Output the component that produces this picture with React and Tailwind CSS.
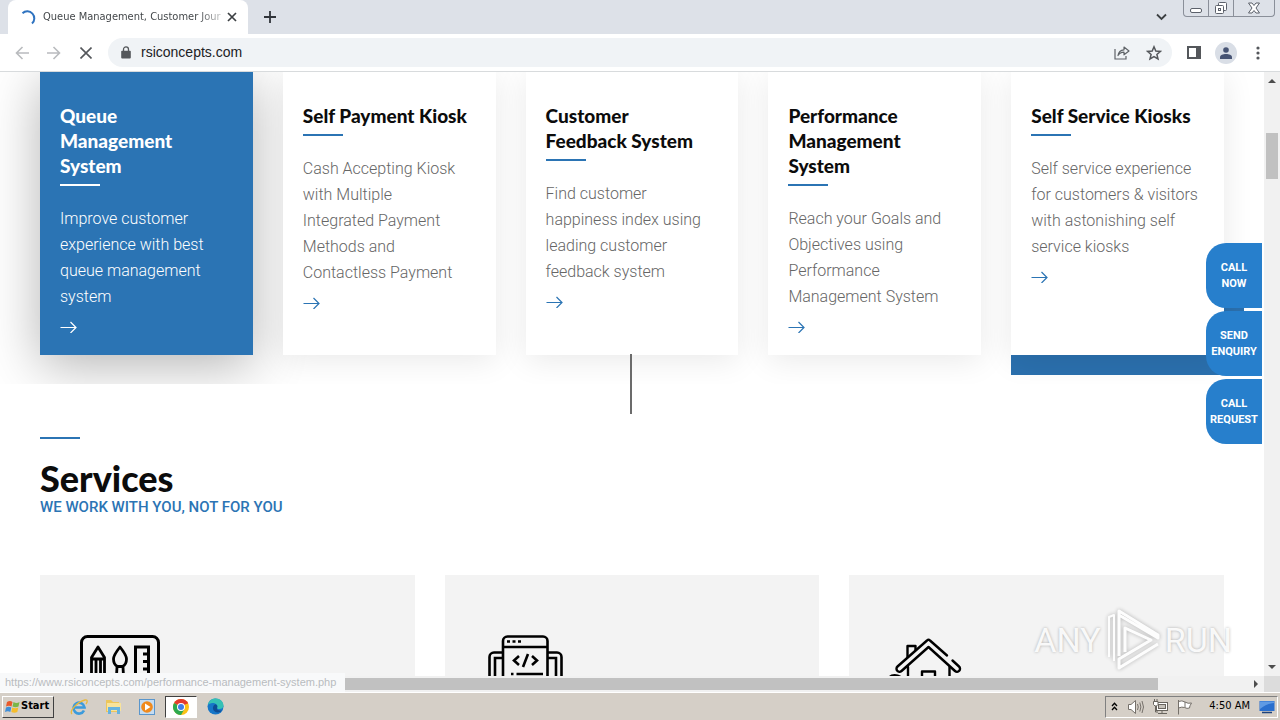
import React, { useState } from 'react';

const products = [
    { title: 'Queue Management System', text: 'Improve customer experience with best queue management system', active: true },
    { title: 'Self Payment Kiosk', text: 'Cash Accepting Kiosk with Multiple Integrated Payment Methods and Contactless Payment', narrow: true },
    { title: 'Customer Feedback System', text: 'Find customer happiness index using leading customer feedback system' },
    { title: 'Performance Management System', text: 'Reach your Goals and Objectives using Performance Management System' },
    { title: 'Self Service Kiosks', text: 'Self service experience for customers & visitors with astonishing self service kiosks', accent: true },
];

const sideActions = [
    ['CALL', 'NOW'],
    ['SEND', 'ENQUIRY'],
    ['CALL', 'REQUEST'],
];

const ArrowIcon = () => (
    <svg width="17" height="12" viewBox="0 0 17 12" fill="none" stroke="currentColor" strokeWidth="1.2">
        <path d="M0.5 6.5H16M10.5 1L16 6.5L10.5 12" />
    </svg>
);

const TabStrip = () => (
    <header className="flex h-[34px] shrink-0 items-start bg-[#dde1e8]">
        <div className="ml-2 flex h-[34px] w-[240px] items-center rounded-t-lg bg-white pr-2 pl-3">
            <svg width="17" height="17" viewBox="0 0 17 17" fill="none" stroke="#2f73c0" strokeWidth="2">
                <path d="M2.5 4.2A7 7 0 1 1 12 14.6" />
            </svg>
            <span className="ml-[6px] w-[181px] bg-gradient-to-r from-[#3c4043] from-85% to-[#3c4043]/20 bg-clip-text text-[11px] whitespace-nowrap text-transparent">
                Queue Management, Customer Jour
            </span>
            <button aria-label="Close tab" className="flex size-4 items-center justify-center">
                <svg width="10" height="10" viewBox="0 0 10 10" stroke="#3c4043" strokeWidth="1.7">
                    <path d="M1 1L9 9M9 1L1 9" />
                </svg>
            </button>
        </div>
        <button aria-label="New tab" className="ml-[14px] flex h-[34px] w-4 items-center justify-center">
            <svg width="12" height="12" viewBox="0 0 12 12" stroke="#30343a" strokeWidth="1.8">
                <path d="M6 0V12M0 6H12" />
            </svg>
        </button>
        <button aria-label="Search tabs" className="ml-auto flex h-[34px] w-4 items-center justify-center">
            <svg width="11" height="8" viewBox="0 0 11 8" fill="none" stroke="#3c4043" strokeWidth="1.8">
                <path d="M1 1.5L5.5 6L10 1.5" />
            </svg>
        </button>
        <div className="mr-[5px] ml-[14px] flex h-[17px] divide-x divide-[#8a8f99] rounded-b border border-t-0 border-[#8a8f99]">
            <button aria-label="Minimize" className="flex w-[25px] items-center justify-center">
                <svg width="12" height="16" viewBox="0 0 12 16" fill="#fff" stroke="#5c616b">
                    <rect x="0.5" y="8.5" width="11" height="4" rx="1.5" />
                </svg>
            </button>
            <button aria-label="Restore" className="flex w-[25px] items-center justify-center">
                <svg width="14" height="14" viewBox="0 0 14 14" fill="#fff" stroke="#5c616b">
                    <rect x="4.5" y="1.5" width="8" height="8" rx="1" />
                    <rect x="1.5" y="4.5" width="8" height="8" rx="1" />
                    <rect x="4.5" y="7.5" width="2" height="2" />
                </svg>
            </button>
            <button aria-label="Close" className="flex w-10 items-center justify-center">
                <svg width="12" height="12" viewBox="0 0 12 12" fill="#fff" stroke="#5c616b" strokeLinejoin="round">
                    <path d="M0.5 1H4L6 3.5L8 1H11.5L8 6L11.5 11H8L6 8.5L4 11H0.5L4 6Z" />
                </svg>
            </button>
        </div>
    </header>
);

const Toolbar = () => {
    const [url, setUrl] = useState('rsiconcepts.com');

    return (
        <div className="flex h-[38px] shrink-0 items-center border-b border-[#d8dbdd] bg-white pr-[14px] pl-[14px]">
            <div className="flex gap-4">
                <button aria-label="Back" className="flex size-4 items-center justify-center">
                    <svg width="14" height="14" viewBox="0 0 14 14" fill="none" stroke="#b9bbbe" strokeWidth="1.6">
                        <path d="M14 7H1.5M7.5 1L1.5 7L7.5 13" />
                    </svg>
                </button>
                <button aria-label="Forward" className="flex size-4 items-center justify-center">
                    <svg width="14" height="14" viewBox="0 0 14 14" fill="none" stroke="#b9bbbe" strokeWidth="1.6">
                        <path d="M0 7H12.5M6.5 1L12.5 7L6.5 13" />
                    </svg>
                </button>
                <button aria-label="Stop" className="flex size-4 items-center justify-center">
                    <svg width="12" height="12" viewBox="0 0 12 12" stroke="#54575b" strokeWidth="1.6">
                        <path d="M0.5 0.5L11.5 11.5M11.5 0.5L0.5 11.5" />
                    </svg>
                </button>
            </div>
            <div className="ml-[14px] flex h-[29px] flex-1 items-center rounded-full bg-[#f0f3f6] pr-[10px] pl-[13px]">
                <svg width="10" height="13" viewBox="0 0 10 13" fill="#54575b">
                    <path d="M1 4.8H9A0.8 0.8 0 0 1 9.8 5.6V11.5A1 1 0 0 1 8.8 12.5H1.2A1 1 0 0 1 0.2 11.5V5.6A0.8 0.8 0 0 1 1 4.8Z" />
                    <path d="M2.5 5V3.4A2.5 2.5 0 0 1 7.5 3.4V5" fill="none" stroke="#54575b" strokeWidth="1.3" />
                </svg>
                <input
                    aria-label="Address"
                    value={url}
                    onChange={(e) => setUrl(e.target.value)}
                    className="ml-[10px] min-w-0 flex-1 bg-transparent font-['Liberation_Sans'] text-[14px] text-[#202124] outline-none"
                />
                <button aria-label="Share" className="flex size-4 items-center justify-center">
                    <svg width="16" height="15" viewBox="0 0 16 15" fill="none" stroke="#5f6368" strokeWidth="1.2">
                        <path d="M1 4V14H12V11" />
                        <path d="M4 10.5C4.5 7 7 5 10 4.8V2L15 6L10 9.8V7.2C7.5 7.2 5.5 8 4 10.5Z" strokeLinejoin="round" />
                    </svg>
                </button>
                <button aria-label="Bookmark" className="ml-4 flex size-4 items-center justify-center">
                    <svg width="16" height="16" viewBox="0 0 16 16" fill="none" stroke="#54575b" strokeWidth="1.5">
                        <path d="M8 1.8L9.8 6L14.4 6.4L10.9 9.4L12 13.9L8 11.5L4 13.9L5.1 9.4L1.6 6.4L6.2 6Z" />
                    </svg>
                </button>
            </div>
            <button aria-label="Side panel" className="ml-[14px] flex size-4 items-center justify-center">
                <svg width="14" height="13" viewBox="0 0 14 13">
                    <rect x="1" y="1" width="12" height="11" fill="#fff" stroke="#54575b" strokeWidth="2" />
                    <rect x="9" y="1" width="4.5" height="11" fill="#54575b" />
                </svg>
            </button>
            <button aria-label="Profile" className="ml-[13px] flex size-[22px] items-center justify-center rounded-full bg-[#d9dee6]">
                <svg width="12" height="12" viewBox="0 0 12 12" fill="#475474">
                    <circle cx="6" cy="3" r="2.8" />
                    <path d="M0 12V10.3C0 8 3 7 6 7S12 8 12 10.3V12Z" />
                </svg>
            </button>
            <button aria-label="Menu" className="ml-[13px] flex size-4 items-center justify-center">
                <svg width="4" height="14" viewBox="0 0 4 14" fill="#54575b">
                    <circle cx="2" cy="2" r="1.6" />
                    <circle cx="2" cy="7" r="1.6" />
                    <circle cx="2" cy="12" r="1.6" />
                </svg>
            </button>
        </div>
    );
};

const ProductCard = ({ item }) => (
    <article className="relative">
        {item.accent && <div className="absolute -right-5 -bottom-5 left-0 h-[100px] bg-[#2b70ae]"></div>}
        <div
            className={
                item.active
                    ? 'relative h-full bg-[#2b74b4] px-5 pt-[31px] pb-[22px] text-white shadow-[0_10px_50px_rgba(0,0,0,0.3)]'
                    : 'relative h-full bg-white px-5 pt-[31px] pb-[22px] text-[#666] shadow-[0_5px_30px_rgba(0,0,0,0.09)]'
            }
        >
            <h3 className={'max-w-[167px] font-["Lato"] text-[19px] leading-[25px] font-black ' + (item.active ? 'text-white' : 'text-[#0c0c0c]')}>{item.title}</h3>
            <div className={'mt-[6px] h-0.5 w-10 ' + (item.active ? 'bg-white' : 'bg-[#2b74b4]')}></div>
            <p className={"mt-5 font-['Roboto'] text-[16px] leading-[26px] font-light " + (item.narrow ? 'pr-4' : '')}>{item.text}</p>
            <a href="#details" aria-label={item.title} className={'mt-[11px] block w-[17px] ' + (item.active ? 'text-white' : 'text-[#2b74b4]')}>
                <ArrowIcon />
            </a>
        </div>
    </article>
);

const DesignIcon = () => (
    <svg width="80" height="80" viewBox="0 0 80 80" fill="none" stroke="#000" strokeWidth="3">
        <rect x="1.5" y="1.5" width="77" height="77" rx="6" />
        <path d="M11.500 50V22.500L18 12L24.500 22.500V50M12 24H24.500M16 25V50M20.500 25V50" strokeLinejoin="round" strokeWidth="2.800" />
        <path d="M40 12C44 17 46.500 20.500 46.500 24C46.500 28 44.500 30.500 42.500 31.500H37.500C35.500 30.500 33.500 28 33.500 24C33.500 20.500 36 17 40 12ZM37 32L36 50M43 32L44 50" strokeLinejoin="round" strokeWidth="2.800" />
        <path d="M55.500 50V12H68.500V50M63 19H68M63 26.500H68M63 34H68" strokeWidth="3" />
    </svg>
);

const CodeIcon = () => (
    <svg width="80" height="80" viewBox="0 0 80 80" fill="none" stroke="#000" strokeWidth="2.6">
        <path d="M18 60V6A4.5 4.5 0 0 1 22.500 1.500H58A4.500 4.500 0 0 1 62.500 6V60M18 12H62.500" />
        <path d="M17 17.500H9A4.500 4.500 0 0 0 4.500 22V60M17 23H10V60M63 17.500H72A4.500 4.500 0 0 1 76.500 22V60M63 23H71V60" />
        <path d="M34 21L29 25.500L34 30M47 21L52 25.500L47 30M43 19L38 32" />
        <path d="M22 6.500H25M27.500 6.500H30.500M33 6.500H36M26 39H28.500M31.500 39H58" />
    </svg>
);

const HouseIcon = () => (
    <svg width="80" height="80" viewBox="0 0 80 80" fill="none" stroke="#000" strokeWidth="2.4" strokeLinecap="round" strokeLinejoin="round">
        <path d="M58 20.500L41 5.500Q39.500 4 38 5.500L8.500 31.500A3 3 0 0 0 12.500 36L39.500 12L66 36A3 3 0 0 0 70 31.500L63.500 25.500" />
        <path d="M18.500 22V11H26.500V15M19 32V60M60.500 32V60M33 60V36.500H46V60" />
        <path d="M1 42C3 40 8 40 11 42" strokeWidth="3" />
    </svg>
);

const serviceIcons = [DesignIcon, CodeIcon, HouseIcon];

const SideActions = () => (
    <div className="absolute top-[171px] right-0.5 flex flex-col gap-[3px]">
        {sideActions.map((lines) => (
            <button
                key={lines.join(' ')}
                className="h-[65px] w-14 rounded-l-[20px] bg-[#277fcc] text-center font-['Roboto'] text-[11px] leading-4 font-bold text-white"
            >
                {lines[0]}
                <br />
                {lines[1]}
            </button>
        ))}
    </div>
);

const Watermark = () => (
    <div className="pointer-events-none absolute right-8 bottom-1 flex items-center gap-1 font-['Roboto'] text-[34px] leading-[62px] text-white/90 [text-shadow:0_0_3px_rgba(0,0,0,0.3)]">
        <span>ANY</span>
        <svg width="56" height="64" viewBox="0 0 56 64" fill="none" stroke="#fff" strokeWidth="3" strokeLinejoin="round" className="opacity-90 drop-shadow-[0_0_2px_rgba(0,0,0,0.3)]">
            <path d="M4 49V9L9 7V53" strokeWidth="2" />
            <path d="M14 48V3L53 27V30L14 7M20 44V20L46 32L14 51V60L53 36" />
        </svg>
        <span>RUN</span>
    </div>
);

const ScrollBarY = () => (
    <div className="flex w-4 shrink-0 flex-col items-center bg-[#f1f1f1]">
        <svg width="16" height="18" viewBox="0 0 16 18" fill="#4d4d4d"><path d="M4 11L8 7L12 11Z" /></svg>
        <div className="mt-[43px] h-[46px] w-3 bg-[#c1c1c1]"></div>
        <svg width="16" height="18" viewBox="0 0 16 18" fill="#4d4d4d" className="mt-auto"><path d="M4 7L8 11L12 7Z" /></svg>
    </div>
);

const Page = () => (
    <main className="relative min-w-0 flex-1 overflow-hidden bg-white">
        <section className="overflow-hidden px-10 pb-[29px]">
            <div className="grid grid-cols-5 gap-[30px]">
                {products.map((item) => (
                    <ProductCard key={item.title} item={item} />
                ))}
            </div>
        </section>
        <section className="relative px-10 pt-[53px]">
            <div className="absolute -top-[30px] left-1/2 h-[60px] w-0.5 -translate-x-full bg-[#6b6b6b]"></div>
            <div className="h-0.5 w-10 bg-[#2b74b4]"></div>
            <h2 className="mt-[21px] font-['Lato'] text-[36px] leading-9 font-black text-[#0c0c0c]">Services</h2>
            <p className="mt-0.5 font-['Roboto'] text-[15px] leading-[18px] font-medium text-[#2b74b4]">WE WORK WITH YOU, NOT FOR YOU</p>
            <div className="mt-[59px] grid grid-cols-3 gap-[30px]">
                {serviceIcons.map((Icon, i) => (
                    <article key={i} className="bg-[#f3f3f3] px-10 py-[60px]">
                        <Icon />
                    </article>
                ))}
            </div>
        </section>
        <SideActions />
        <Watermark />
    </main>
);

const Taskbar = () => (
    <footer className="flex h-7 shrink-0 items-center border-t border-white bg-[#d5cfc7] px-0.5 text-[11px] text-black">
        <button className="flex h-[22px] w-[52px] items-center gap-px border border-t-white border-r-[#404040] border-b-[#404040] border-l-white pl-0.5 font-bold">
            <svg width="15" height="14" viewBox="0 0 15 14">
                <path d="M2 2Q5 0 7.500 2L6.500 6.500Q4 5 1 6.500Z" fill="#e8592b" />
                <path d="M8.500 2Q11.500 4 14.500 2L13.500 6.500Q10.500 8 7.500 6.500Z" fill="#7ab648" />
                <path d="M1 7.500Q4 6 6.300 7.500L5.300 12Q3 10.500 0 12Z" fill="#3e8ed8" />
                <path d="M7.300 7.500Q10.300 9 13.300 7.500L12.300 12Q9.500 13.500 6.300 12Z" fill="#f5bd2c" />
            </svg>
            Start
        </button>
        <div className="ml-[9px] flex items-center gap-0.5">
            <button aria-label="Internet Explorer" className="flex h-[22px] w-8 items-center justify-center">
                <svg width="18" height="18" viewBox="0 0 18 18" fill="none">
                    <path d="M14 12.500A5.500 5.500 0 1 1 14.500 9.500H4.500" stroke="#3b9bdc" strokeWidth="2.600" />
                    <path d="M2 16C-1 13 7 4 15 2C18 1.500 17.500 4 16 6" stroke="#e9b93c" strokeWidth="1.300" />
                </svg>
            </button>
            <button aria-label="Explorer" className="flex h-[22px] w-8 items-center justify-center">
                <svg width="17" height="17" viewBox="0 0 17 17">
                    <path d="M1 2H6L8 4H14V14H1Z" fill="#ecc65b" />
                    <path d="M2 5H16V13H2Z" fill="#f8e39a" />
                    <path d="M3 9H15V16H12V12H6V16H3Z" fill="#67b3df" />
                </svg>
            </button>
            <button aria-label="Media Player" className="flex h-[22px] w-8 items-center justify-center">
                <svg width="16" height="16" viewBox="0 0 16 16">
                    <rect x="0.500" y="0.500" width="15" height="15" fill="#c5dcf1" stroke="#5a96cc" />
                    <circle cx="8" cy="8" r="5.800" fill="#f08a1d" />
                    <path d="M6 4.500L11.500 8L6 11.500Z" fill="#fff" />
                </svg>
            </button>
            <button aria-label="Chrome" className="flex h-[22px] w-8 items-center justify-center border border-t-[#404040] border-r-white border-b-white border-l-[#404040] bg-white">
                <svg width="16" height="16" viewBox="0 0 16 16">
                    <circle cx="8" cy="8" r="8" fill="#fbc116" />
                    <path d="M8 8L1.070 4A8 8 0 0 1 14.930 4Z" fill="#e33b2e" />
                    <path d="M8 8L1.070 4A8 8 0 0 0 8 16L11.500 10Z" fill="#2da94f" />
                    <path d="M8 4H14.900" stroke="#e33b2e" />
                    <circle cx="8" cy="8" r="4" fill="#fff" />
                    <circle cx="8" cy="8" r="3" fill="#3f7ee8" />
                </svg>
            </button>
            <button aria-label="Edge" className="flex h-[22px] w-8 items-center justify-center">
                <svg width="17" height="17" viewBox="0 0 17 17">
                    <circle cx="8.500" cy="8.500" r="8" fill="#1676c8" />
                    <path d="M0.800 7C2 2.500 5 0.500 8.500 0.500C13.500 0.500 16.500 4 16.500 7.500C16.500 10 14.500 11 12.500 11C10.500 11 9.800 10.200 10.300 9.200C11 7 8.500 5 5.500 5C3.500 5 1.500 6 0.800 7Z" fill="#35c1b5" />
                    <path d="M10.200 9.300C9 11.500 11.500 13 15 12.500C12.500 15.500 7 15 6 11C5.500 8.500 7 6.500 8.500 6.200C10 6.800 10.800 8 10.200 9.300Z" fill="#0d4c94" />
                </svg>
            </button>
        </div>
        <div className="ml-auto flex h-[22px] items-center border border-t-[#808080] border-r-white border-b-white border-l-[#808080] pr-0.5 pl-[5px]">
            <button aria-label="Show hidden icons" className="w-[7px]">
                <svg width="7" height="9" viewBox="0 0 7 9" fill="none" stroke="#000" strokeWidth="1.300">
                    <path d="M1 4L3.500 1.300L6 4M1 8L3.500 5.300L6 8" />
                </svg>
            </button>
            <svg width="18" height="16" viewBox="0 0 18 16" fill="#fff" stroke="#75706a" className="ml-[9px]">
                <path d="M1.500 5.500H4L8.500 1.500V14.500L4 10.500H1.500Z" strokeLinejoin="round" />
                <path d="M10.500 5Q12 8 10.500 11M12.800 3.500Q15 8 12.800 12.500M15 2Q18 8 15 14" fill="none" />
            </svg>
            <svg width="17" height="16" viewBox="0 0 17 16" fill="#fff" stroke="#68645e" className="ml-[7px]">
                <rect x="4.500" y="3.500" width="11" height="8" />
                <rect x="6.500" y="5.500" width="7" height="4" fill="#c6c2bb" />
                <path d="M6 14.500H15M10 12V14M3.500 7V13H6" fill="none" />
                <path d="M1.500 2.500H6V5.500L4.500 7H3L1.500 5.500ZM2.500 0V2M5 0V2" />
            </svg>
            <svg width="17" height="16" viewBox="0 0 17 16" fill="#fff" stroke="#75706a" className="ml-[7px]">
                <path d="M2.500 1V15.500M2.500 2.500Q6 1 9 3Q12 5 15.500 4Q13.500 7 13.500 9Q11 10 8.500 8.500Q6 7.500 2.500 9" />
                <path d="M9 3V8.500" />
            </svg>
            <time className="ml-4">4:50 AM</time>
            <svg width="16" height="14" viewBox="0 0 16 14" className="ml-[9px]">
                <rect x="0.500" y="1" width="15" height="10" fill="#2a6fce" />
                <path d="M1 1.500H15V3Q7 4 1 9Z" fill="#5f9ae4" />
                <path d="M3 12.500H13" stroke="#1d427c" strokeWidth="1.500" />
            </svg>
        </div>
    </footer>
);

const App = () => {
    return (
        <div className="flex h-screen flex-col overflow-hidden bg-white font-['DejaVu_Sans_Condensed','DejaVu_Sans',sans-serif]">
            <TabStrip />
            <Toolbar />
            <div className="relative flex min-h-0 flex-1 flex-col">
                <div className="flex min-h-0 flex-1">
                    <Page />
                    <ScrollBarY />
                </div>
                <div className="flex h-4 shrink-0 bg-[#f1f1f1]">
                    <div className="flex flex-1 items-center pl-4">
                        <div className="h-3 flex-1 bg-[#c1c1c1]"></div>
                        <svg width="16" height="14" viewBox="0 0 16 14" fill="#4d4d4d" className="ml-[90px]"><path d="M6 3L10 7L6 11Z" /></svg>
                    </div>
                    <div className="w-4 bg-[#dcdcdc]"></div>
                </div>
                <div className="absolute bottom-0 left-0 h-[19px] w-[345px] bg-[#f8f9fa] pl-[5px] font-['Liberation_Sans'] text-[11px] leading-[19px] whitespace-nowrap text-[#b9bcbf]">
                    https://www.rsiconcepts.com/performance-management-system.php
                </div>
            </div>
            <Taskbar />
        </div>
    );
};

export default App;
